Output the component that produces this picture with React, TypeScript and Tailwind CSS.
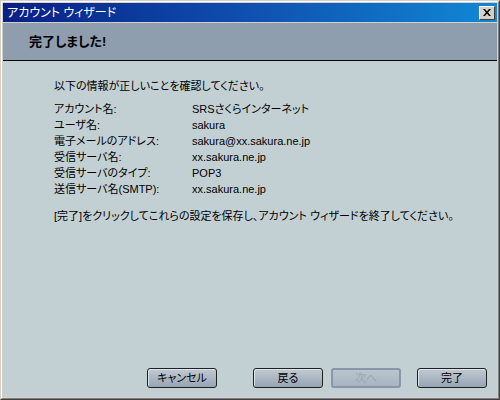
import React from 'react';

const rows: [string, string][] = [
  ['アカウント名:', 'SRSさくらインターネット'],
  ['ユーザ名:', 'sakura'],
  ['電子メールのアドレス:', 'sakura@xx.sakura.ne.jp'],
  ['受信サーバ名:', 'xx.sakura.ne.jp'],
  ['受信サーバのタイプ:', 'POP3'],
  ['送信サーバ名(SMTP):', 'xx.sakura.ne.jp'],
];

function WizButton({ label, disabled }: { label: string; disabled?: boolean }) {
  if (disabled) {
    return (
      <div className="w-[70px] h-[20px] rounded-[3px] border-2 border-[#8797a8] bg-gradient-to-b from-[#b9c4ce] to-[#a8b4c0] flex items-center justify-center text-[#9aa6b2]">
        {label}
      </div>
    );
  }
  return (
    <div className="w-[70px] h-[20px] rounded-[3px] border border-[#202020] bg-gradient-to-b from-[#c0cad4] to-[#98a4b4] shadow-[inset_1px_1px_0_#dde4ea] flex items-center justify-center text-black">
      {label}
    </div>
  );
}

export default function App() {
  return (
    <div
      className="w-[500px] h-[400px] flex flex-col bg-[#c2d0d3] border-t border-l border-t-[#d4d0c8] border-l-[#d4d0c8] border-r border-b border-r-[#404040] border-b-[#404040] text-[11px] [font-feature-settings:'palt']"
      style={{ fontFamily: '"Liberation Sans", "Noto Sans CJK JP", sans-serif' }}
    >
      <div className="flex-1 flex flex-col border-t border-l border-white border-r border-b border-r-[#808080] border-b-[#808080] p-px bg-[#d4d0c8]">
        {/* title bar */}
        <div className="h-[19px] flex items-center justify-between pl-[4px] pr-[2px] bg-gradient-to-r from-[#0a1e86] via-[#1050b0] to-[#1288d6]">
          <span className="text-white text-[12px] leading-none">アカウント ウィザード</span>
          <div className="w-[16px] h-[14px] bg-[#d4d0c8] border-t border-l border-white border-r border-b border-r-[#404040] border-b-[#404040] flex items-center justify-center">
            <svg width="8" height="7" viewBox="0 0 8 7">
              <path d="M0 0h2l2 2.5L6 0h2L5 3.5 8 7H6L4 4.5 2 7H0l3-3.5z" fill="#000" />
            </svg>
          </div>
        </div>

        {/* header */}
        <div className="mt-px h-[38px] bg-[#8e9eae] border-b border-black flex items-center pl-[26px]">
          <span className="font-bold text-[13px] text-black">完了しました!</span>
        </div>

        {/* body */}
        <div className="flex-1 flex flex-col bg-[#c2d0d3] text-black pl-[51px] pr-[10px] pt-[17px] pb-[9px] whitespace-nowrap">
          <div className="leading-[16px]">以下の情報が正しいことを確認してください。</div>
          <div className="mt-[7px] grid grid-cols-[138px_1fr] leading-[16px]">
            {rows.map(([k, v]) => (
              <React.Fragment key={k}>
                <span>{k}</span>
                <span>{v}</span>
              </React.Fragment>
            ))}
          </div>
          <div className="mt-[11px] leading-[16px]">
            [完了]をクリックしてこれらの設定を保存し、アカウント ウィザードを終了してください。
          </div>

          <div className="mt-auto flex items-center justify-end">
            <WizButton label="キャンセル" />
            <div className="w-[36px]" />
            <WizButton label="戻る" />
            <div className="w-[8px]" />
            <WizButton label="次へ" disabled />
            <div className="w-[16px]" />
            <WizButton label="完了" />
          </div>
        </div>
      </div>
    </div>
  );
}
